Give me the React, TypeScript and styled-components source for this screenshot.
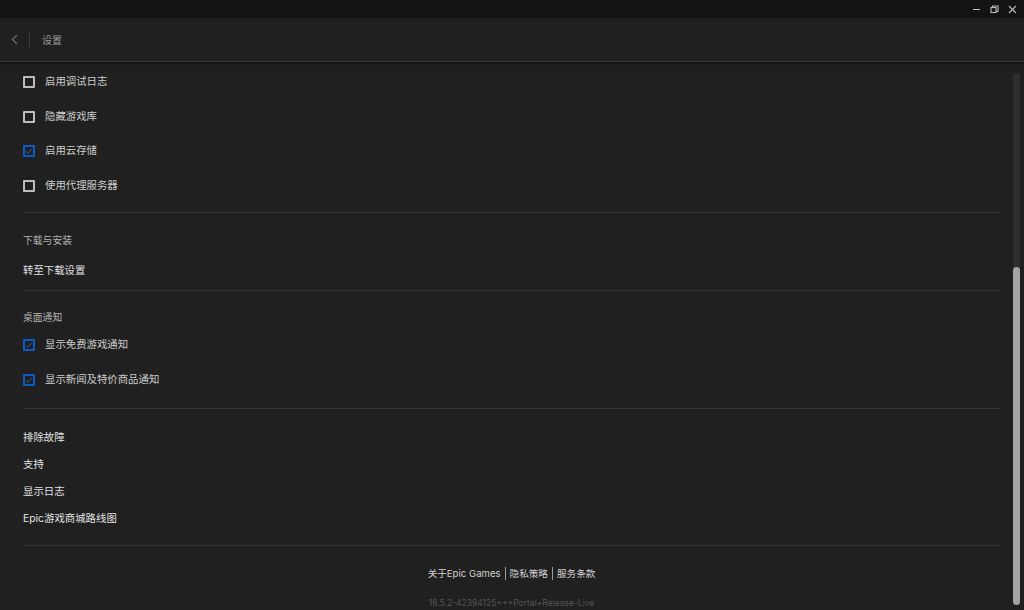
import styled, { createGlobalStyle } from "styled-components";

const GlobalStyle = createGlobalStyle`
  html, body {
    margin: 0;
    padding: 0;
    background: #202020;
    overflow: hidden;
  }
  body {
    font-family: Inter, "Noto Sans CJK SC", sans-serif;
  }
`;

const Page = styled.div`
  width: 1024px;
  height: 610px;
  display: flex;
  flex-direction: column;
  background: #202020;
  overflow: hidden;
`;

const TitleBar = styled.div`
  height: 18px;
  background: #131313;
  display: flex;
  justify-content: flex-end;
  align-items: center;
  padding-right: 4px;
  gap: 2px;
  flex-shrink: 0;
`;

const WinButton = styled.div`
  width: 16px;
  height: 18px;
  display: flex;
  align-items: center;
  justify-content: center;
  color: #bdbdbd;
`;

const Header = styled.div`
  height: 43px;
  display: flex;
  align-items: center;
  background: #202020;
  border-bottom: 1px solid #3a3a3a;
  box-shadow: 0 1px 2px rgba(0, 0, 0, 0.7);
  flex-shrink: 0;
  position: relative;
  z-index: 1;
`;

const BackButton = styled.div`
  width: 29px;
  display: flex;
  justify-content: center;
  color: #6a6a6a;
`;

const HeaderSep = styled.div`
  width: 1px;
  height: 17px;
  background: #3a3a3a;
  margin-right: 12px;
`;

const HeaderTitle = styled.span`
  font-size: 10px;
  line-height: 14px;
  color: #9a9a9a;
`;

const Main = styled.div`
  flex: 1;
  display: flex;
  min-height: 0;
`;

const Content = styled.div`
  flex: 1;
  padding: 3px 13px 0 23px;
  display: flex;
  flex-direction: column;
`;

const CheckRow = styled.label`
  height: 34.5px;
  display: flex;
  align-items: center;
  gap: 10px;
  flex-shrink: 0;
`;

const Box = styled.span<{ $checked?: boolean }>`
  width: 12px;
  height: 12px;
  box-sizing: border-box;
  border: 2px solid ${(p) => (p.$checked ? "#0b5bc4" : "#bcbcbc")};
  border-radius: 1px;
  display: flex;
  align-items: center;
  justify-content: center;
`;

const RowLabel = styled.span`
  font-size: 10.4px;
  line-height: 14px;
  color: #cdcdcd;
`;

const Divider = styled.div<{ $mt: number }>`
  height: 1px;
  background: #343434;
  margin-top: ${(p) => p.$mt}px;
  flex-shrink: 0;
`;

const Section = styled.div<{ $pt: number }>`
  padding-top: ${(p) => p.$pt}px;
  display: flex;
  flex-direction: column;
`;

const SectionTitle = styled.div`
  height: 22px;
  display: flex;
  align-items: center;
  font-size: 9.8px;
  color: #b4b4b4;
`;

const LinkRow = styled.div<{ $h: number }>`
  height: ${(p) => p.$h}px;
  display: flex;
  align-items: center;
  font-size: 10.4px;
  color: #e2e2e2;
  cursor: pointer;
`;

const Footer = styled.div`
  display: flex;
  flex-direction: column;
  align-items: center;
  padding-top: 19px;
`;

const FooterLinks = styled.div`
  height: 16px;
  display: flex;
  align-items: center;
  gap: 4px;
  font-size: 9.6px;
  color: #d0d0d0;
`;

const FooterSep = styled.span`
  width: 1px;
  height: 13px;
  background: #9a9a9a;
`;

const Version = styled.div`
  margin-top: 16px;
  font-size: 8.5px;
  line-height: 12px;
  color: #555555;
`;

const ScrollTrack = styled.div`
  width: 7px;
  margin: 11px 4px 5px 0;
  background: #2e2e2e;
  border-radius: 4px;
  display: flex;
  flex-direction: column;
  justify-content: flex-end;
  flex-shrink: 0;
`;

const ScrollThumb = styled.div`
  height: 338px;
  background: #a3a3a3;
  border-radius: 4px;
`;

const Check = () => (
  <svg width="8" height="8" viewBox="0 0 8 8">
    <path d="M1 4.2 L3 6.2 L7 1.8" fill="none" stroke="#2a64b0" strokeWidth="1" />
  </svg>
);

const CheckItem = ({ label, checked }: { label: string; checked?: boolean }) => (
  <CheckRow>
    <Box $checked={checked}>{checked && <Check />}</Box>
    <RowLabel>{label}</RowLabel>
  </CheckRow>
);

export default function App() {
  return (
    <Page>
      <GlobalStyle />
      <TitleBar>
        <WinButton>
          <svg width="9" height="9" viewBox="0 0 9 9">
            <path d="M1 4.5 H8" stroke="currentColor" strokeWidth="1" />
          </svg>
        </WinButton>
        <WinButton>
          <svg width="9" height="9" viewBox="0 0 9 9">
            <rect x="1" y="2.5" width="5" height="5" fill="none" stroke="currentColor" strokeWidth="1.1" />
            <path d="M2.5 2.5 V1 H8 V6.5 H6" fill="none" stroke="currentColor" strokeWidth="1.1" />
          </svg>
        </WinButton>
        <WinButton>
          <svg width="9" height="9" viewBox="0 0 9 9">
            <path d="M1 1 L8 8 M8 1 L1 8" stroke="currentColor" strokeWidth="1.1" />
          </svg>
        </WinButton>
      </TitleBar>
      <Header>
        <BackButton>
          <svg width="7" height="11" viewBox="0 0 7 11">
            <path d="M6 1 L1.5 5.5 L6 10" fill="none" stroke="currentColor" strokeWidth="1.3" />
          </svg>
        </BackButton>
        <HeaderSep />
        <HeaderTitle>设置</HeaderTitle>
      </Header>
      <Main>
        <Content>
          <CheckItem label="启用调试日志" />
          <CheckItem label="隐藏游戏库" />
          <CheckItem label="启用云存储" checked />
          <CheckItem label="使用代理服务器" />
          <Divider $mt={9} />
          <Section $pt={16}>
            <SectionTitle>下载与安装</SectionTitle>
            <LinkRow $h={36}>转至下载设置</LinkRow>
          </Section>
          <Divider $mt={3} />
          <Section $pt={15}>
            <SectionTitle>桌面通知</SectionTitle>
            <CheckItem label="显示免费游戏通知" checked />
            <CheckItem label="显示新闻及特价商品通知" checked />
          </Section>
          <Divider $mt={11} />
          <Section $pt={13.5}>
            <LinkRow $h={27}>排除故障</LinkRow>
            <LinkRow $h={27}>支持</LinkRow>
            <LinkRow $h={27}>显示日志</LinkRow>
            <LinkRow $h={27}>Epic游戏商城路线图</LinkRow>
          </Section>
          <Divider $mt={14.5} />
          <Footer>
            <FooterLinks>
              <span>关于Epic Games</span>
              <FooterSep />
              <span>隐私策略</span>
              <FooterSep />
              <span>服务条款</span>
            </FooterLinks>
            <Version>18.5.2-42394125+++Portal+Release-Live</Version>
          </Footer>
        </Content>
        <ScrollTrack>
          <ScrollThumb />
        </ScrollTrack>
      </Main>
    </Page>
  );
}
